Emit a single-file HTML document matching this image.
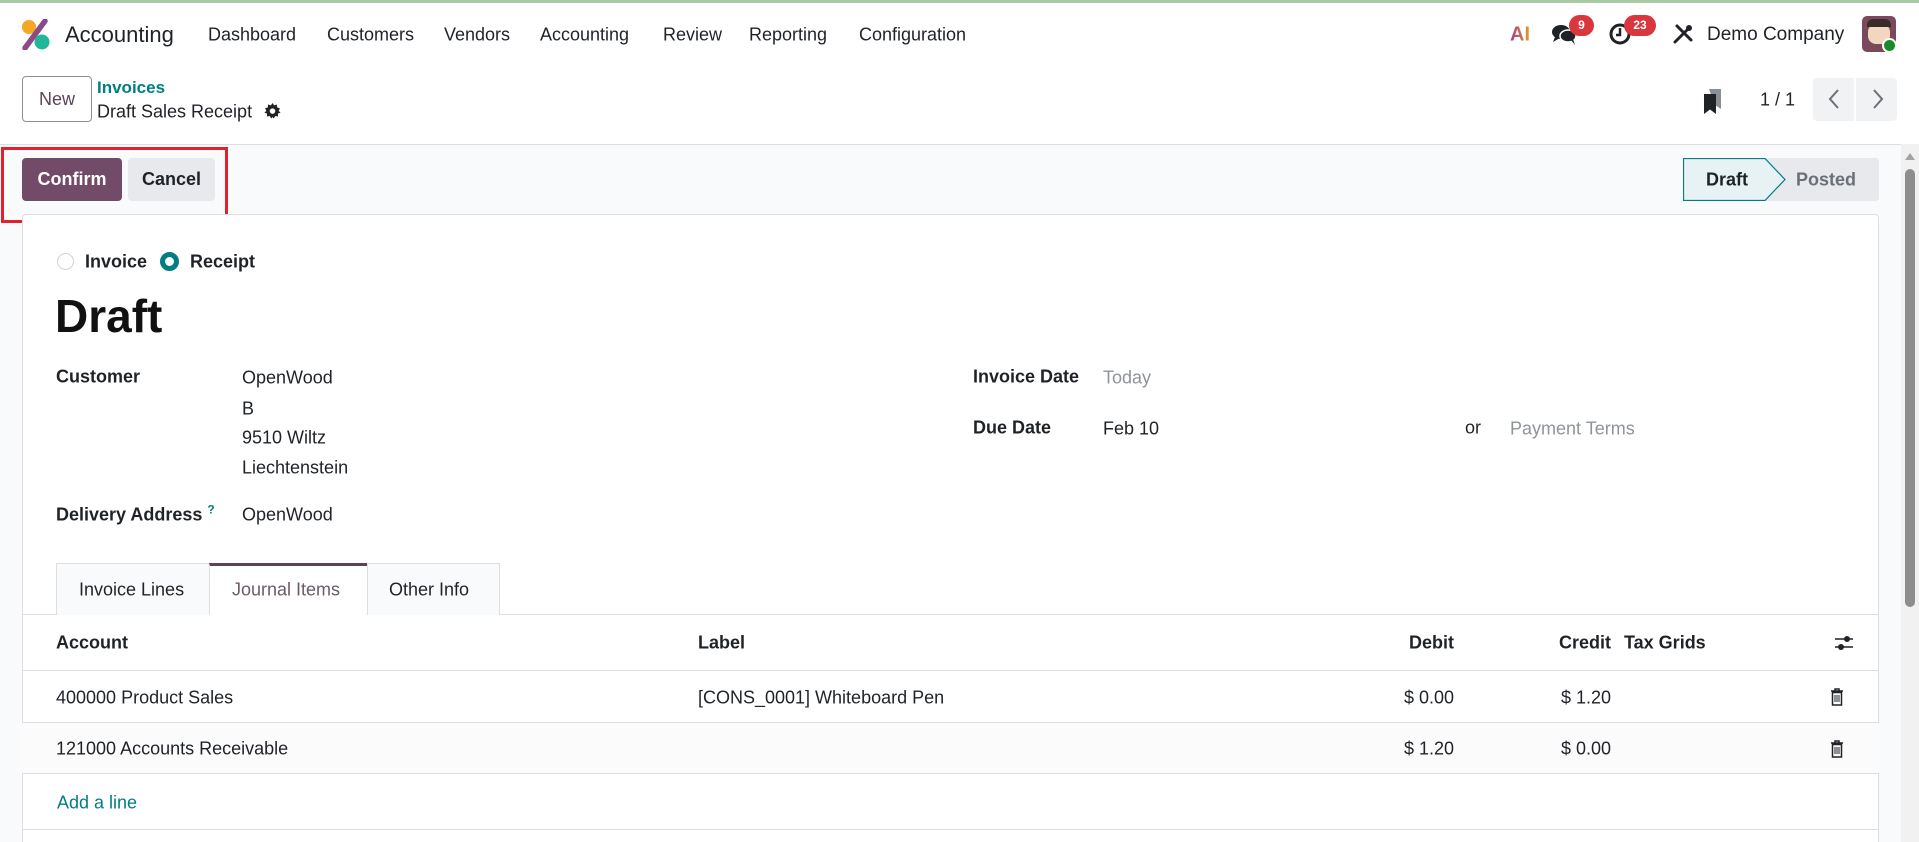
<!DOCTYPE html>
<html><head><meta charset="utf-8"><style>
*{box-sizing:border-box;margin:0;padding:0}
html,body{width:1919px;height:842px;overflow:hidden}
body{background:#fff;font-family:"Liberation Sans",sans-serif;color:#1f2328;position:relative;font-size:18px}
.a{position:absolute;white-space:nowrap}
.mid{transform:translateY(-50%)}
.b{font-weight:bold}
.teal{color:#017e84}
.muted{color:#8f949a}
</style></head><body>
<div class="a" style="left:0;top:0;width:1919px;height:3px;background:#a9cba3"></div>
<svg class="a" style="left:21px;top:19px" width="30" height="31" viewBox="0 0 30 31">
<circle cx="8" cy="8" r="7" fill="#f5a623"/><circle cx="21" cy="23" r="7.5" fill="#21b799"/>
<path d="M24 2 L4 29" stroke="#8d4a8a" stroke-width="5.5" stroke-linecap="round"/></svg>
<div class="a mid" style="left:65px;top:35px;font-size:22px;color:#1f2328">Accounting</div>
<div class="a mid" style="left:208px;top:35px">Dashboard</div>
<div class="a mid" style="left:327px;top:35px">Customers</div>
<div class="a mid" style="left:444px;top:35px">Vendors</div>
<div class="a mid" style="left:540px;top:35px">Accounting</div>
<div class="a mid" style="left:663px;top:35px">Review</div>
<div class="a mid" style="left:749px;top:35px">Reporting</div>
<div class="a mid" style="left:859px;top:35px">Configuration</div>
<div class="a mid b" style="left:1510px;top:35px;font-size:20px;background:linear-gradient(90deg,#9b3f8f,#e49a2a);-webkit-background-clip:text;color:transparent">AI</div>
<svg class="a" style="left:1551px;top:22px" width="28" height="24" viewBox="0 0 28 24"><ellipse cx="10" cy="10" rx="9" ry="7" fill="#1f2328"/><path d="M4 15 L2 20 L9 16Z" fill="#1f2328"/><ellipse cx="17" cy="14" rx="8" ry="6" fill="#1f2328" stroke="#fff" stroke-width="1.5"/><path d="M20 18 L24 23 L22 17Z" fill="#1f2328"/></svg>
<div class="a" style="left:1569px;top:15px;width:25px;height:21px;border-radius:11px;background:#d9363e;color:#fff;font-size:12px;font-weight:bold;text-align:center;line-height:21px">9</div>
<svg class="a" style="left:1608px;top:22px" width="24" height="24" viewBox="0 0 24 24"><circle cx="12" cy="12" r="9" fill="none" stroke="#1f2328" stroke-width="3"/><path d="M12 6v7h-4" fill="none" stroke="#1f2328" stroke-width="2.5"/></svg>
<div class="a" style="left:1624px;top:15px;width:32px;height:21px;border-radius:11px;background:#d9363e;color:#fff;font-size:12px;font-weight:bold;text-align:center;line-height:21px">23</div>
<svg class="a" style="left:1672px;top:23px" width="22" height="22" viewBox="0 0 22 22"><path d="M3 19 L17 5 M5 3 L19 17" stroke="#1f2328" stroke-width="3" stroke-linecap="round"/><circle cx="17" cy="5" r="3" fill="#1f2328"/></svg>
<div class="a mid" style="left:1707px;top:35px;font-size:19px">Demo Company</div>
<div class="a" style="left:1862px;top:16px;width:34px;height:36px;border-radius:5px;background:#7a4a5c"><div style="position:absolute;left:6px;top:8px;width:22px;height:20px;border-radius:8px;background:#f2d6c0"></div><div style="position:absolute;left:5px;top:3px;width:24px;height:8px;border-radius:6px 6px 0 0;background:#3b2a2a"></div></div>
<div class="a" style="left:1882px;top:38px;width:15px;height:15px;border-radius:50%;background:#1a8b2a;border:2px solid #fff"></div>
<div class="a" style="left:22px;top:76px;width:70px;height:46px;border:1px solid #8a8f96;border-radius:4px;font-size:18px;color:#5b4457;text-align:center;line-height:44px">New</div>
<div class="a mid b teal" style="left:97px;top:88px;font-size:17px">Invoices</div>
<div class="a mid" style="left:97px;top:112px;font-size:18px">Draft Sales Receipt</div>
<svg class="a" style="left:264px;top:103px" width="17" height="17" viewBox="0 0 16 16"><path d="M8 0l1.5 2.2 2.6-.8.3 2.7 2.6.9-1.2 2.4L15.6 9l-2.5 1 .1 2.7-2.6-.5L9.2 14.6 8 13.2 6.8 14.6 5.4 12.2l-2.6.5.1-2.7L.4 9l1.8-1.6L1 5l2.6-.9.3-2.7 2.6.8z" fill="#1f2328"/><circle cx="8" cy="7.6" r="2.6" fill="#fff"/></svg>
<svg class="a" style="left:1702px;top:87px" width="22" height="28" viewBox="0 0 22 28"><path d="M7 2h12v20l-6-4z" fill="#8a8f96"/><path d="M2 7h12v20l-6-4.5L2 27z" fill="#1f2328"/></svg>
<div class="a mid" style="left:1760px;top:100px;font-size:18px">1 / 1</div>
<div class="a" style="left:1813px;top:78px;width:41px;height:43px;background:#f1f2f4;border-radius:4px 0 0 4px"></div>
<div class="a" style="left:1856px;top:78px;width:41px;height:43px;background:#f1f2f4;border-radius:0 4px 4px 0"></div>
<svg class="a" style="left:1825px;top:88px" width="18" height="22" viewBox="0 0 18 22"><path d="M13 2L5 11l8 9" fill="none" stroke="#6b7077" stroke-width="2"/></svg>
<svg class="a" style="left:1869px;top:88px" width="18" height="22" viewBox="0 0 18 22"><path d="M5 2l8 9-8 9" fill="none" stroke="#6b7077" stroke-width="2"/></svg>
<div class="a" style="left:0;top:144px;width:1901px;height:698px;background:#f9fafb;border-top:1px solid #dcdee2"></div>
<div class="a" style="left:1901px;top:144px;width:18px;height:698px;background:#f1f1f1"></div>
<svg class="a" style="left:1904px;top:152px" width="12" height="9" viewBox="0 0 12 9"><path d="M6 1L11 8H1z" fill="#a3a3a3"/></svg>
<div class="a" style="left:1905px;top:169px;width:10px;height:438px;background:#8d8d8d;border-radius:5px"></div>
<div class="a" style="left:22px;top:158px;width:100px;height:43px;background:#714b67;border-radius:4px;color:#fff;font-weight:bold;font-size:18px;text-align:center;line-height:43px">Confirm</div>
<div class="a" style="left:128px;top:158px;width:87px;height:43px;background:#e7e9ed;border-radius:4px;color:#1f2328;font-weight:bold;font-size:18px;text-align:center;line-height:43px">Cancel</div>
<div class="a" style="left:1px;top:147px;width:227px;height:76px;border:3px solid #e2202e"></div>
<div class="a" style="left:1683px;top:158px;width:196px;height:43px;background:#e7e9ed;border-radius:0 3px 3px 0"></div>
<svg class="a" style="left:1683px;top:158px" width="104" height="43" viewBox="0 0 104 43"><path d="M0.5 0.5H82L102 21.5 82 42.5H0.5z" fill="#e6f2f3" stroke="#017e84" stroke-width="1.2"/></svg>
<div class="a mid b" style="left:1706px;top:180px;font-size:18px">Draft</div>
<div class="a mid b" style="left:1796px;top:180px;font-size:18px;color:#6b7077">Posted</div>
<div class="a" style="left:22px;top:214px;width:1857px;height:628px;background:#fff;border:1px solid #dcdee2;border-bottom:none;border-radius:4px 4px 0 0"></div>
<div class="a" style="left:57px;top:253px;width:17px;height:17px;border-radius:50%;border:1px solid #cfd2d6"></div>
<div class="a mid b" style="left:85px;top:262px;font-size:18px">Invoice</div>
<div class="a" style="left:160px;top:252px;width:19px;height:19px;border-radius:50%;border:5px solid #017e84"></div>
<div class="a mid b" style="left:190px;top:262px;font-size:18px">Receipt</div>
<div class="a mid b" style="left:55px;top:316px;font-size:46px;color:#111">Draft</div>
<div class="a mid b" style="left:56px;top:377px">Customer</div>
<div class="a mid" style="left:242px;top:378px">OpenWood</div>
<div class="a mid" style="left:242px;top:409px">B</div>
<div class="a mid" style="left:242px;top:438px">9510 Wiltz</div>
<div class="a mid" style="left:242px;top:468px">Liechtenstein</div>
<div class="a mid b" style="left:56px;top:514px">Delivery Address <sup class="teal" style="font-size:12px">?</sup></div>
<div class="a mid" style="left:242px;top:515px">OpenWood</div>
<div class="a mid b" style="left:973px;top:377px">Invoice Date</div>
<div class="a mid muted" style="left:1103px;top:378px">Today</div>
<div class="a mid b" style="left:973px;top:428px">Due Date</div>
<div class="a mid" style="left:1103px;top:429px">Feb 10</div>
<div class="a mid" style="left:1465px;top:428px">or</div>
<div class="a mid muted" style="left:1510px;top:429px">Payment Terms</div>
<div class="a" style="left:22px;top:614px;width:1857px;height:1px;background:#dcdee2"></div>
<div class="a" style="left:56px;top:563px;width:154px;height:52px;background:#f9fafb;border:1px solid #dcdee2;border-bottom:none"></div>
<div class="a mid" style="left:79px;top:590px">Invoice Lines</div>
<div class="a" style="left:209px;top:563px;width:159px;height:52px;background:#fff;border:1px solid #dcdee2;border-top:3px solid #5b4457;border-bottom:1px solid #fff"></div>
<div class="a mid" style="left:232px;top:590px;color:#6b5a67">Journal Items</div>
<div class="a" style="left:367px;top:563px;width:133px;height:52px;background:#f9fafb;border:1px solid #dcdee2;border-bottom:none"></div>
<div class="a mid" style="left:389px;top:590px">Other Info</div>
<div class="a" style="left:22px;top:670px;width:1857px;height:1px;background:#dcdee2"></div>
<div class="a mid b" style="left:56px;top:643px">Account</div>
<div class="a mid b" style="left:698px;top:643px">Label</div>
<div class="a mid b" style="right:465px;top:643px">Debit</div>
<div class="a mid b" style="right:308px;top:643px">Credit</div>
<div class="a mid b" style="left:1624px;top:643px">Tax Grids</div>
<svg class="a" style="left:1834px;top:634px" width="20" height="18" viewBox="0 0 20 18"><path d="M1 5h18M1 13h18" stroke="#1f2328" stroke-width="1.6"/><circle cx="13" cy="5" r="3" fill="#1f2328"/><circle cx="7" cy="13" r="3" fill="#1f2328"/></svg>
<div class="a mid" style="left:56px;top:698px">400000 Product Sales</div>
<div class="a mid" style="left:698px;top:698px">[CONS_0001] Whiteboard Pen</div>
<div class="a mid" style="right:465px;top:698px">$ 0.00</div>
<div class="a mid" style="right:308px;top:698px">$ 1.20</div>
<div class="a" style="left:22px;top:722px;width:1857px;height:52px;background:#fbfbfc;border-top:1px solid #dcdee2;border-bottom:1px solid #dcdee2"></div>
<div class="a mid" style="left:56px;top:749px">121000 Accounts Receivable</div>
<div class="a mid" style="right:465px;top:749px">$ 1.20</div>
<div class="a mid" style="right:308px;top:749px">$ 0.00</div>
<svg class="a" style="left:1830px;top:688px" width="14" height="18" viewBox="0 0 14 18"><path d="M1 3h12M5 3V1h4v2M2.5 4.5h9V17h-9z" fill="none" stroke="#1f2328" stroke-width="1.5"/><path d="M5 7v7M7 7v7M9 7v7" stroke="#1f2328" stroke-width="1"/></svg>
<svg class="a" style="left:1830px;top:740px" width="14" height="18" viewBox="0 0 14 18"><path d="M1 3h12M5 3V1h4v2M2.5 4.5h9V17h-9z" fill="none" stroke="#1f2328" stroke-width="1.5"/><path d="M5 7v7M7 7v7M9 7v7" stroke="#1f2328" stroke-width="1"/></svg>
<div class="a mid teal" style="left:57px;top:803px">Add a line</div>
<div class="a" style="left:22px;top:829px;width:1857px;height:1px;background:#dcdee2"></div>
</body></html>
